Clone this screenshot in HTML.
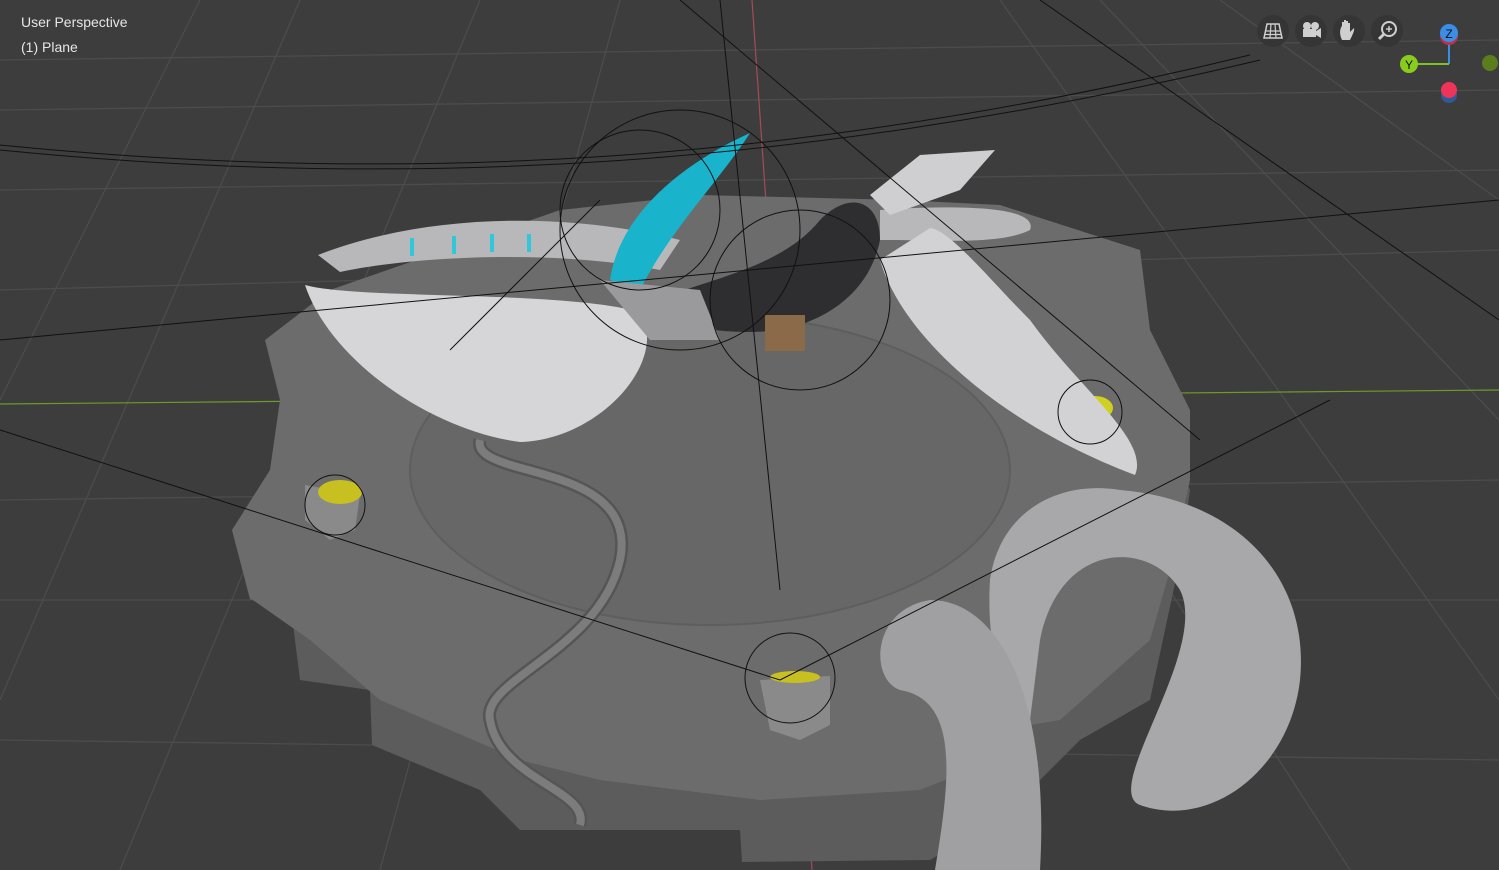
<!DOCTYPE html>
<html><head><meta charset="utf-8"><style>
html,body{margin:0;padding:0;width:1499px;height:870px;overflow:hidden;background:#3d3d3d}
.t{position:absolute;color:#e6e6e6;font:14px "Liberation Sans",sans-serif}
</style></head><body>
<svg width="1499" height="870" style="position:absolute;left:0;top:0">
<rect width="1499" height="870" fill="#3d3d3d"/>
<g stroke="#4c4c4c" stroke-width="1.3" fill="none">
<line x1="0" y1="190" x2="1499" y2="170"/><line x1="0" y1="290" x2="1499" y2="250"/>
<line x1="0" y1="500" x2="1499" y2="480"/><line x1="0" y1="600" x2="1499" y2="600"/>
<line x1="0" y1="740" x2="1499" y2="760"/><line x1="0" y1="110" x2="1499" y2="90"/>
<line x1="0" y1="60" x2="1499" y2="40"/>
<line x1="0" y1="700" x2="300" y2="0"/><line x1="120" y1="870" x2="480" y2="0"/>
<line x1="380" y1="870" x2="620" y2="0"/><line x1="1100" y1="0" x2="1499" y2="420"/>
<line x1="1000" y1="0" x2="1499" y2="700"/><line x1="1220" y1="0" x2="1499" y2="200"/>
<line x1="1150" y1="560" x2="1350" y2="870"/><line x1="0" y1="400" x2="200" y2="0"/>
</g>
<line x1="0" y1="404" x2="1499" y2="390" stroke="#6f9a2a" stroke-width="1.2"/>
<line x1="752" y1="0" x2="812" y2="870" stroke="#a34b5a" stroke-width="1.2"/>
<!-- platform sides -->
<polygon points="232,530 250,600 290,600 300,680 370,690 372,745 480,790 520,830 740,830 742,862 930,860 1000,820 1080,740 1150,700 1180,560 1190,490 1150,400 960,380 350,380 290,470" fill="#5c5c5c"/>
<!-- platform top -->
<polygon points="232,530 270,470 280,400 265,340 330,290 560,210 700,195 900,200 1000,205 1140,250 1150,330 1190,410 1190,480 1170,570 1150,640 1060,720 1000,730 970,770 920,790 760,800 600,780 520,760 380,700 310,640 250,598" fill="#6c6c6c"/>
<ellipse cx="710" cy="470" rx="300" ry="155" fill="#676767" stroke="#5e5e5e" stroke-width="2"/>
<!-- tubes -->
<path d="M1140,805 C1100,790 1210,650 1180,590 C1150,540 1060,540 1040,640 L1030,720 C1010,720 985,660 990,580 C1000,510 1060,480 1120,490 C1240,500 1310,580 1300,680 C1290,770 1210,830 1140,805Z" fill="#a8a8aa"/>
<path d="M935,870 C950,780 960,700 900,690 C870,680 870,610 930,600 C1000,600 1050,700 1040,870Z" fill="#a0a0a2"/>
<!-- cable -->
<path d="M480,440 C470,480 640,460 620,560 C600,650 480,680 490,720 C500,780 590,790 580,825" stroke="#555" stroke-width="13" fill="none"/>
<path d="M480,440 C470,480 640,460 620,560 C600,650 480,680 490,720 C500,780 590,790 580,825" stroke="#7c7c7c" stroke-width="8" fill="none"/>
<!-- emitters -->
<g fill="#8a8a8a"><polygon points="305,485 360,495 355,530 330,540 305,520"/><ellipse cx="340" cy="492" rx="22" ry="12" fill="#c8c020"/>
<polygon points="760,680 830,676 830,725 800,740 770,730"/><ellipse cx="795" cy="677" rx="25" ry="6" fill="#c8c020"/>
<ellipse cx="1095" cy="408" rx="18" ry="12" fill="#d0d020"/></g>
<!-- ring arm -->
<path d="M318,255 C420,215 560,210 680,240 L660,270 C560,250 420,255 340,272Z" fill="#b8b8ba"/>
<g fill="#30c8d8"><rect x="410" y="238" width="4" height="18"/><rect x="452" y="236" width="4" height="18"/><rect x="490" y="234" width="4" height="18"/><rect x="527" y="234" width="4" height="18"/></g>
<path d="M880,210 C950,205 1040,205 1030,230 C1000,245 940,240 880,240Z" fill="#b8b8ba"/>
<!-- blades -->
<path d="M305,285 C360,300 560,290 640,312 C670,360 600,440 520,442 C430,430 330,360 305,285Z" fill="#d6d6d8"/>
<path d="M880,260 C900,330 990,420 1135,475 C1150,440 1080,390 1030,320 C990,280 950,230 930,228Z" fill="#d2d2d4"/>
<path d="M870,195 L920,155 L995,150 L960,190 L890,215Z" fill="#cfcfd1"/>
<path d="M610,280 C620,210 690,160 750,133 C720,180 670,230 640,290Z" fill="#1ab3cc"/>
<!-- body -->
<path d="M660,300 C700,280 780,270 820,220 C850,190 880,200 880,240 C870,290 830,320 780,330 C740,335 700,330 660,320Z" fill="#2e2e30"/>
<path d="M600,280 L700,290 L720,340 L650,340Z" fill="#9a9a9c"/>
<rect x="765" y="315" width="40" height="36" fill="#8a6a48"/>
<!-- wire lines -->
<g stroke="#111" fill="none" stroke-width="1">
<path d="M0,150 C400,190 800,170 1260,60"/><path d="M0,145 C400,185 800,165 1250,55"/>
<line x1="0" y1="340" x2="1499" y2="200"/><line x1="0" y1="430" x2="780" y2="680"/>
<line x1="780" y1="680" x2="1330" y2="400"/><line x1="680" y1="0" x2="1200" y2="440"/>
<line x1="720" y1="0" x2="780" y2="590"/><line x1="1040" y1="0" x2="1499" y2="320"/>
<circle cx="680" cy="230" r="120"/><circle cx="800" cy="300" r="90"/><circle cx="640" cy="210" r="80"/>
<circle cx="1090" cy="412" r="32"/><line x1="450" y1="350" x2="600" y2="200"/>
<circle cx="335" cy="505" r="30"/><circle cx="790" cy="678" r="45"/>
</g>
</svg>
<div class="t" style="left:21px;top:14px">User Perspective</div>
<div class="t" style="left:21px;top:39px">(1) Plane</div>
<svg width="249" height="110" style="position:absolute;left:1250px;top:0">
<g fill="#353535"><circle cx="23" cy="31" r="16"/><circle cx="61" cy="31" r="16"/><circle cx="99" cy="31" r="16"/><circle cx="137" cy="31" r="16"/></g>
<g fill="#cfcfcf" stroke="none">
<path d="M14,38 L17,24 L29,24 L32,38Z" fill="none" stroke="#cfcfcf" stroke-width="1.5"/>
<path d="M16,31 H30 M15.5,34.5 H31 M21,24 L20,38 M25,24 L26,38" stroke="#cfcfcf" stroke-width="1.2"/>
<circle cx="57" cy="26" r="4"/><circle cx="65" cy="26" r="4"/><rect x="53" y="29" width="13" height="8"/><path d="M66,31 L71,28 V38 L66,35Z"/>
<path d="M92,40 C89,34 90,28 92,26 V22 h2 V30 V20 h2 V30 V21 h2 V30 V23 h2 V32 L104,28 C105,30 102,36 100,40Z"/>
<circle cx="139" cy="29" r="7" fill="none" stroke="#cfcfcf" stroke-width="2"/><path d="M134,34 L129,39" stroke="#cfcfcf" stroke-width="3"/><path d="M136,29 H142 M139,26 V32" stroke="#cfcfcf" stroke-width="1.5"/>
</g>
<line x1="199" y1="34" x2="199" y2="64" stroke="#3b8ee8" stroke-width="2"/>
<line x1="159" y1="64" x2="199" y2="64" stroke="#80c020" stroke-width="2"/>
<circle cx="199" cy="95" r="8" fill="#2d5b9a"/><circle cx="199" cy="90" r="8" fill="#ee3458"/>
<circle cx="199" cy="36" r="9" fill="#c0304a"/><circle cx="199" cy="33" r="9" fill="#3b8ee8"/>
<circle cx="159" cy="64" r="9" fill="#8acc1c"/><circle cx="240" cy="63" r="8" fill="#5a7e1e"/>
<text x="199" y="38" font-size="12" font-family="Liberation Sans" text-anchor="middle" fill="#111">Z</text>
<text x="159" y="69" font-size="12" font-family="Liberation Sans" text-anchor="middle" fill="#111">Y</text>
</svg>
</body></html>
